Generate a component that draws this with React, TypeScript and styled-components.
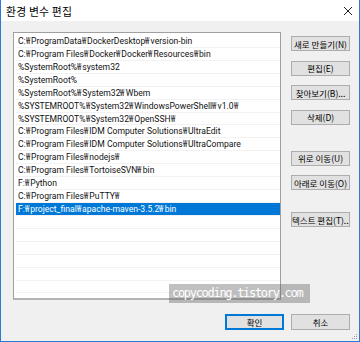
import React from 'react';
import styled, { createGlobalStyle } from 'styled-components';

const GlobalStyle = createGlobalStyle`
  html, body {
    margin: 0;
    padding: 0;
    background: #f0f0f0;
  }
  * {
    box-sizing: border-box;
  }
`;

const Window = styled.div`
  position: relative;
  width: 360px;
  height: 342px;
  background: #f0f0f0;
  border: 1px solid #2b7bd6;
  border-top: none;
  display: flex;
  flex-direction: column;
  font-family: "Noto Sans", "Noto Sans CJK KR", sans-serif;
  overflow: hidden;
`;

const TitleBar = styled.div`
  height: 21px;
  background: #ffffff;
  display: flex;
  align-items: center;
  justify-content: space-between;
  padding: 0 5px 0 5px;
`;

const Title = styled.span`
  font-family: "Noto Sans CJK KR", sans-serif;
  font-size: 10.8px;
  color: #000;
  letter-spacing: 0.2px;
`;

const CloseButton = styled.div`
  width: 12px;
  height: 12px;
  display: flex;
  align-items: center;
  justify-content: center;
`;

const Body = styled.div`
  display: flex;
  padding: 11px 9px 0 12px;
  gap: 10px;
`;

const ListBox = styled.div`
  width: 268px;
  height: 268px;
  background: #ffffff;
  border: 1px solid #a0a0a0;
  border-bottom: 2px solid #b4b4b4;
  padding: 2px 0 0 2px;
  overflow: hidden;
`;

const Row = styled.div<{ $selected?: boolean }>`
  height: 12.93px;
  line-height: 12px;
  padding-left: 2px;
  font-family: Roboto, "Noto Sans", "Noto Sans CJK KR", sans-serif;
  font-size: 8.6px;
  white-space: nowrap;
  overflow: hidden;
  color: ${(p) => (p.$selected ? '#ffffff' : '#111111')};
  background: ${(p) => (p.$selected ? '#0078d7' : 'transparent')};
  border-bottom: 1px solid #f2f2f2;
`;

// Malgun Gothic draws the path separator as a narrow won sign
const Won = styled.span`
  display: inline-block;
  width: 5.3px;
  font-family: "Noto Sans", sans-serif;
  transform: scaleX(0.74);
  transform-origin: 0 50%;
`;

const ButtonColumn = styled.div`
  display: flex;
  flex-direction: column;
  padding-top: 4px;
`;

const ButtonGroup = styled.div<{ $top: number }>`
  display: flex;
  flex-direction: column;
  gap: 9.6px;
  margin-top: ${(p) => p.$top}px;
`;

const SideButton = styled.button`
  width: 59px;
  height: 15px;
  padding: 0;
  background: #e1e1e1;
  border: 1px solid #adadad;
  font-family: "Noto Sans CJK KR", sans-serif;
  font-size: 8.5px;
  line-height: 12px;
  color: #000;
  white-space: nowrap;
  overflow: hidden;
`;

const Footer = styled.div`
  display: flex;
  justify-content: flex-end;
  gap: 7px;
  margin-top: 14px;
  padding-right: 9px;
`;

const DialogButton = styled.button<{ $primary?: boolean }>`
  width: 59px;
  height: 16px;
  padding: 0;
  background: #e1e1e1;
  border: 1px solid ${(p) => (p.$primary ? '#0078d7' : '#adadad')};
  box-shadow: ${(p) => (p.$primary ? 'inset 0 0 0 1px #0078d7' : 'none')};
  font-family: "Noto Sans CJK KR", sans-serif;
  font-size: 8.5px;
  line-height: 12px;
  color: #000;
`;

const Watermark = styled.div`
  position: absolute;
  left: 168px;
  top: 284px;
  width: 141px;
  height: 19px;
  background: rgba(90, 90, 90, 0.38);
  color: #ffffff;
  font-family: "DejaVu Sans Mono", monospace;
  font-size: 12px;
  letter-spacing: -1.3px;
  line-height: 19px;
  padding-left: 3px;
  white-space: nowrap;
`;

const Grip = styled.svg`
  position: absolute;
  right: 1px;
  bottom: 1px;
`;

const paths = [
  'C:₩ProgramData₩DockerDesktop₩version-bin',
  'C:₩Program Files₩Docker₩Docker₩Resources₩bin',
  '%SystemRoot%₩system32',
  '%SystemRoot%',
  '%SystemRoot%₩System32₩Wbem',
  '%SYSTEMROOT%₩System32₩WindowsPowerShell₩v1.0₩',
  '%SYSTEMROOT%₩System32₩OpenSSH₩',
  'C:₩Program Files₩IDM Computer Solutions₩UltraEdit',
  'C:₩Program Files₩IDM Computer Solutions₩UltraCompare',
  'C:₩Program Files₩nodejs₩',
  'C:₩Program Files₩TortoiseSVN₩bin',
  'F:₩Python',
  'C:₩Program Files₩PuTTY₩',
  'F:₩project_final₩apache-maven-3.5.2₩bin',
];

const selectedIndex = 13;
const totalRows = 21;

const renderPath = (text: string) =>
  text.split('₩').map((part, i) => (
    <React.Fragment key={i}>
      {i > 0 && <Won>₩</Won>}
      {part}
    </React.Fragment>
  ));

const App: React.FC = () => {
  const rows = Array.from({ length: totalRows }, (_, i) => paths[i] ?? '');

  return (
    <>
      <GlobalStyle />
      <Window>
        <TitleBar>
          <Title>환경 변수 편집</Title>
          <CloseButton>
            <svg width="10" height="10" viewBox="0 0 10 10">
              <path d="M1 1 L9 9 M9 1 L1 9" stroke="#222" strokeWidth="1" />
            </svg>
          </CloseButton>
        </TitleBar>

        <Body>
          <ListBox>
            {rows.map((text, i) => (
              <Row key={i} $selected={i === selectedIndex}>
                {text ? renderPath(text) : '\u00a0'}
              </Row>
            ))}
          </ListBox>

          <ButtonColumn>
            <ButtonGroup $top={0}>
              <SideButton>새로 만들기(N)</SideButton>
              <SideButton>편집(E)</SideButton>
              <SideButton>찾아보기(B)...</SideButton>
              <SideButton>삭제(D)</SideButton>
            </ButtonGroup>
            <ButtonGroup $top={26}>
              <SideButton>위로 이동(U)</SideButton>
              <SideButton>아래로 이동(O)</SideButton>
            </ButtonGroup>
            <ButtonGroup $top={22}>
              <SideButton>텍스트 편집(T)...</SideButton>
            </ButtonGroup>
          </ButtonColumn>
        </Body>

        <Footer>
          <DialogButton $primary>확인</DialogButton>
          <DialogButton>취소</DialogButton>
        </Footer>

        <Watermark>copycoding.tistory.com</Watermark>

        <Grip width="7" height="7" viewBox="0 0 7 7">
          <rect x="5" y="1" width="1" height="1" fill="#a0a0a0" />
          <rect x="3" y="3" width="1" height="1" fill="#a0a0a0" />
          <rect x="5" y="3" width="1" height="1" fill="#a0a0a0" />
          <rect x="1" y="5" width="1" height="1" fill="#a0a0a0" />
          <rect x="3" y="5" width="1" height="1" fill="#a0a0a0" />
          <rect x="5" y="5" width="1" height="1" fill="#a0a0a0" />
        </Grip>
      </Window>
    </>
  );
};

export default App;
